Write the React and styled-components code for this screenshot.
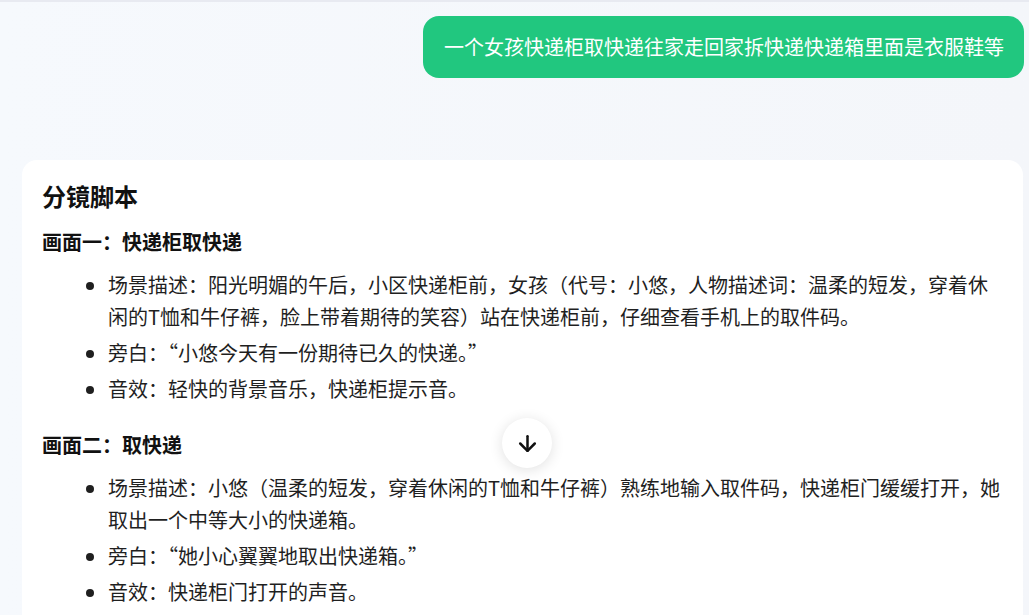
import React from 'react';
import styled, { createGlobalStyle } from 'styled-components';
import { ArrowDown } from 'lucide-react';

const GlobalStyle = createGlobalStyle`
  html, body {
    margin: 0;
    padding: 0;
    height: 615px;
    overflow: hidden;
  }
  body {
    font-family: 'Noto Sans CJK SC', 'Noto Sans', sans-serif;
    color: #1f1f1f;
  }
  * {
    box-sizing: border-box;
  }
`;

const Page = styled.div`
  position: relative;
  height: 615px;
  border-top: 2px solid #e8eaf1;
  background: linear-gradient(90deg, #f6f9fd 0%, #f4f6fa 100%);
  padding: 14px 5px 0 22px;
  display: flex;
  flex-direction: column;
`;

const UserRow = styled.div`
  display: flex;
  justify-content: flex-end;
`;

const Bubble = styled.div`
  background-color: #21c77f;
  color: #ffffff;
  font-size: 20px;
  line-height: 30px;
  padding: 16px 20px 16px 21px;
  border-radius: 16px;
  white-space: nowrap;
`;

const Answer = styled.div`
  margin-top: 82px;
  margin-right: 1px;
  background-color: #ffffff;
  border-radius: 15px 15px 0 0;
  padding: 18px 21px 0 20px;
  flex: 1;
`;

const Title = styled.h2`
  margin: 0;
  font-size: 24px;
  line-height: 36px;
  font-weight: 700;
  color: #111111;
`;

const SceneTitle = styled.h3`
  margin: 12px 0 11px;
  font-size: 20px;
  line-height: 32px;
  font-weight: 700;
  color: #111111;
`;

const List = styled.ul`
  margin: 0 0 24px;
  padding-left: 66px;
  list-style: disc;
`;

const Item = styled.li`
  font-size: 20px;
  line-height: 32px;
  margin-top: ${(p) => (p.first ? '0' : '4px')};
  color: #1f1f1f;
`;

const ScrollButton = styled.button`
  position: absolute;
  left: 502px;
  top: 416px;
  width: 50px;
  height: 50px;
  border: none;
  border-radius: 50%;
  background-color: #ffffff;
  box-shadow: 0 2px 14px rgba(0, 0, 0, 0.12);
  display: flex;
  align-items: center;
  justify-content: center;
  color: #111111;
  padding: 0;
`;

const scenes = [
  {
    title: '画面一：快递柜取快递',
    items: [
      '场景描述：阳光明媚的午后，小区快递柜前，女孩（代号：小悠，人物描述词：温柔的短发，穿着休闲的T恤和牛仔裤，脸上带着期待的笑容）站在快递柜前，仔细查看手机上的取件码。',
      '旁白：“小悠今天有一份期待已久的快递。”',
      '音效：轻快的背景音乐，快递柜提示音。',
    ],
  },
  {
    title: '画面二：取快递',
    items: [
      '场景描述：小悠（温柔的短发，穿着休闲的T恤和牛仔裤）熟练地输入取件码，快递柜门缓缓打开，她取出一个中等大小的快递箱。',
      '旁白：“她小心翼翼地取出快递箱。”',
      '音效：快递柜门打开的声音。',
    ],
  },
];

const App = () => {
  return (
    <>
      <GlobalStyle />
      <Page>
        <UserRow>
          <Bubble>一个女孩快递柜取快递往家走回家拆快递快递箱里面是衣服鞋等</Bubble>
        </UserRow>
        <Answer>
          <Title>分镜脚本</Title>
          {scenes.map((scene) => (
            <React.Fragment key={scene.title}>
              <SceneTitle>{scene.title}</SceneTitle>
              <List>
                {scene.items.map((text, i) => (
                  <Item key={i} first={i === 0}>
                    {text}
                  </Item>
                ))}
              </List>
            </React.Fragment>
          ))}
        </Answer>
        <ScrollButton aria-label='scroll down'>
          <ArrowDown size={25} strokeWidth={2.4} />
        </ScrollButton>
      </Page>
    </>
  );
};

export default App;
